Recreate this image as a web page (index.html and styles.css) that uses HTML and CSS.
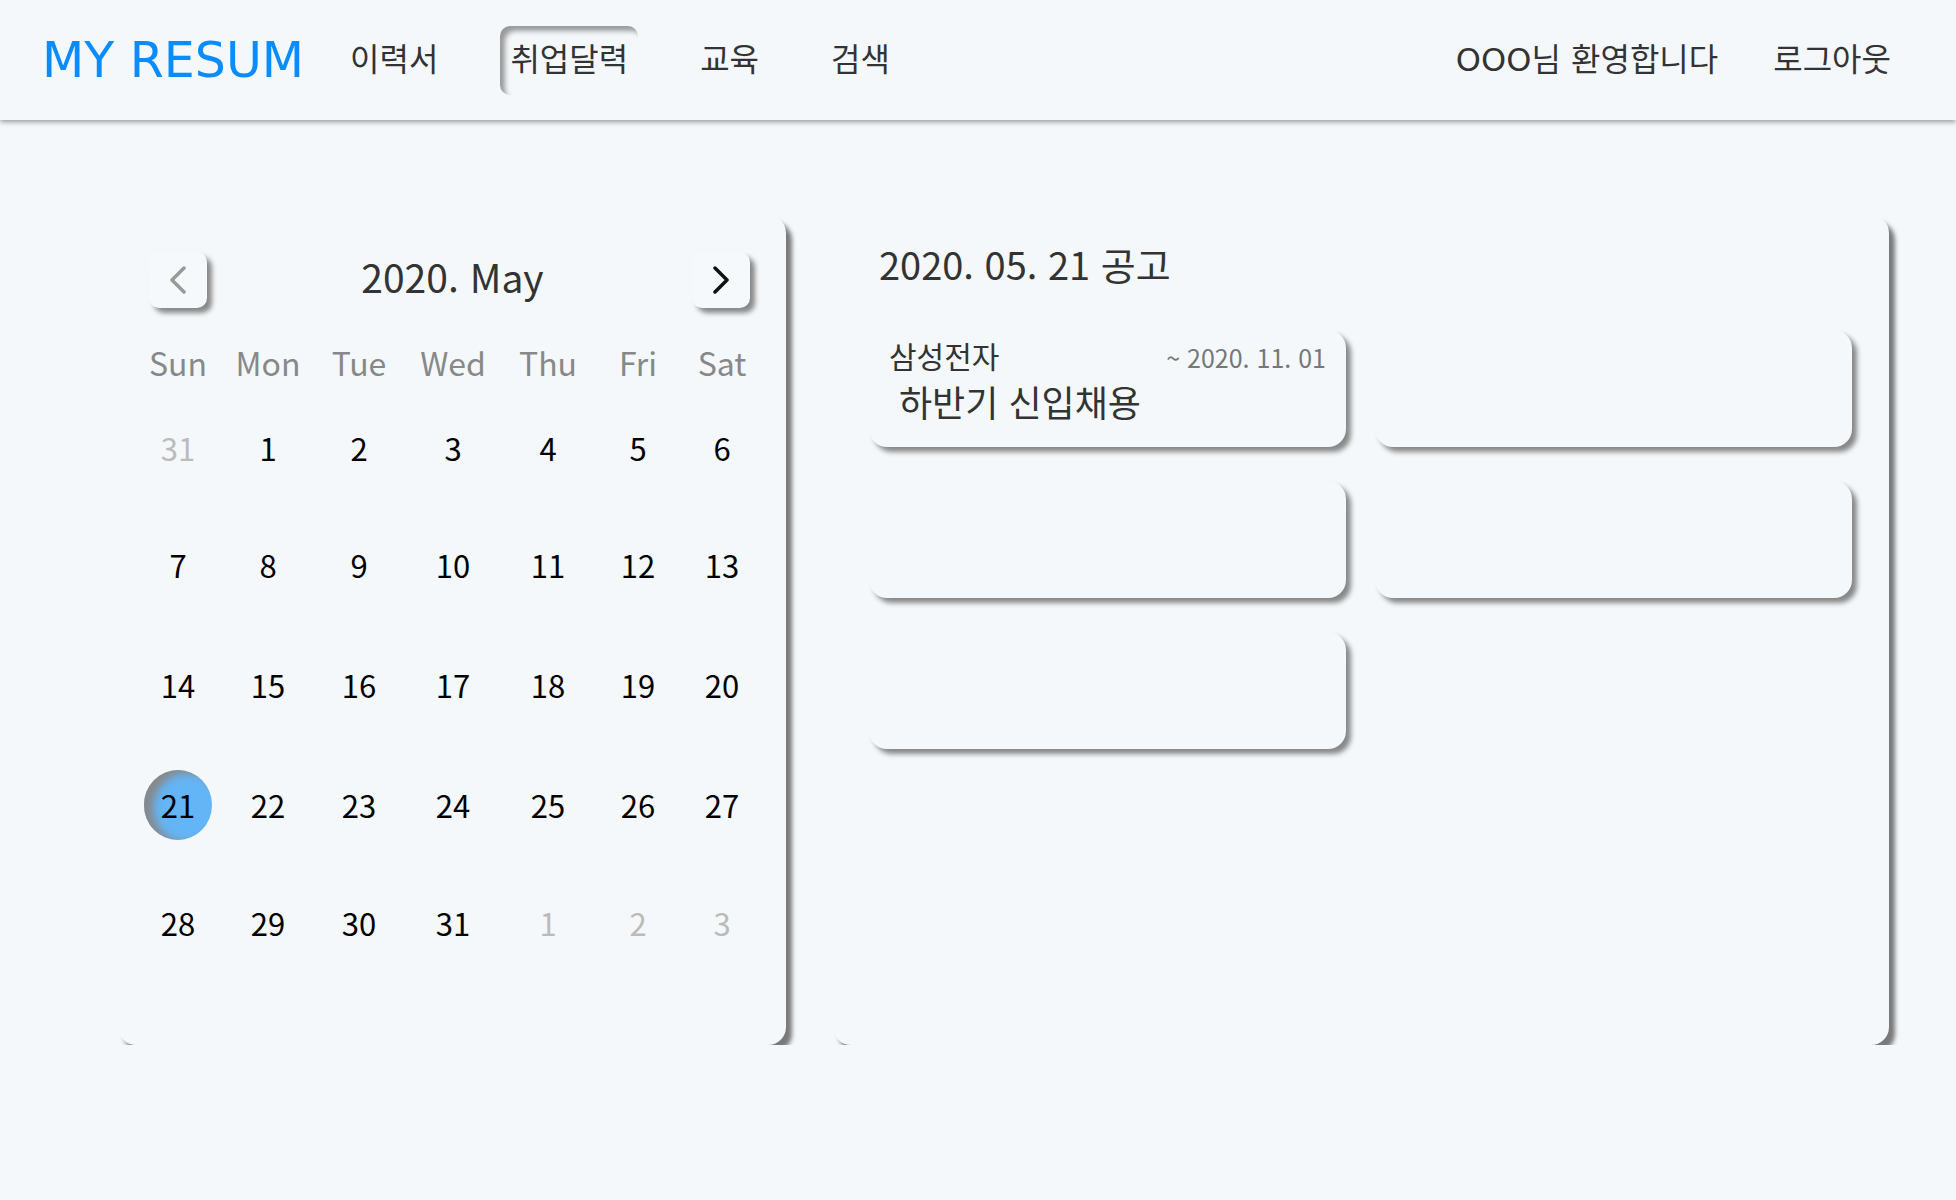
FILE: index.html
```html
<!DOCTYPE html>
<html lang="ko">
<head>
    <meta charset="UTF-8">
    <meta name="viewport" content="width=device-width, initial-scale=1.0">
    <title>MY RESUM - 취업달력</title>
    <link rel="stylesheet" href="styles.css">
</head>
<body>
    <header class="header">
        <div class="logo">MY RESUM</div>
        <nav class="nav">
            <a class="nav-item">이력서</a>
            <a class="nav-item active">취업달력</a>
            <a class="nav-item">교육</a>
            <a class="nav-item">검색</a>
        </nav>
        <div class="user-menu">
            <span class="nav-item">OOO님 환영합니다</span>
            <a class="nav-item">로그아웃</a>
        </div>
    </header>

    <main class="main">
        <!-- Calendar -->
        <section class="calendar card">
            <div class="cal-head">
                <button class="cal-btn prev">
                    <svg width="20" height="28" viewBox="0 0 20 28"><path d="M16 2 L4 14 L16 26" fill="none" stroke="#999" stroke-width="3.5" stroke-linecap="round" stroke-linejoin="round"/></svg>
                </button>
                <div class="cal-title">2020. May</div>
                <button class="cal-btn next">
                    <svg width="20" height="28" viewBox="0 0 20 28"><path d="M4 2 L16 14 L4 26" fill="none" stroke="#111" stroke-width="3.5" stroke-linecap="round" stroke-linejoin="round"/></svg>
                </button>
            </div>

            <div class="cal-grid">
                <div class="wd">Sun</div>
                <div class="wd">Mon</div>
                <div class="wd">Tue</div>
                <div class="wd">Wed</div>
                <div class="wd">Thu</div>
                <div class="wd">Fri</div>
                <div class="wd">Sat</div>

                <div class="day other">31</div>
                <div class="day">1</div>
                <div class="day">2</div>
                <div class="day">3</div>
                <div class="day">4</div>
                <div class="day">5</div>
                <div class="day">6</div>

                <div class="day">7</div>
                <div class="day">8</div>
                <div class="day">9</div>
                <div class="day">10</div>
                <div class="day">11</div>
                <div class="day">12</div>
                <div class="day">13</div>

                <div class="day">14</div>
                <div class="day">15</div>
                <div class="day">16</div>
                <div class="day">17</div>
                <div class="day">18</div>
                <div class="day">19</div>
                <div class="day">20</div>

                <div class="day"><span class="today">21</span></div>
                <div class="day">22</div>
                <div class="day">23</div>
                <div class="day">24</div>
                <div class="day">25</div>
                <div class="day">26</div>
                <div class="day">27</div>

                <div class="day">28</div>
                <div class="day">29</div>
                <div class="day">30</div>
                <div class="day">31</div>
                <div class="day other">1</div>
                <div class="day other">2</div>
                <div class="day other">3</div>
            </div>
        </section>

        <!-- Job postings -->
        <section class="postings card">
            <div class="post-title">2020. 05. 21 공고</div>
            <div class="post-grid">
                <div class="post">
                    <div class="post-top">
                        <span class="company">삼성전자</span>
                        <span class="deadline">~ 2020. 11. 01</span>
                    </div>
                    <div class="post-name">하반기 신입채용</div>
                </div>
                <div class="post"></div>
                <div class="post"></div>
                <div class="post"></div>
                <div class="post"></div>
            </div>
        </section>
    </main>
</body>
</html>
```

FILE: styles.css
```css
body {
    margin: 0;
    background: #f4f8fb;
    font-family: 'Noto Sans CJK KR', sans-serif;
    color: #333;
}

.header {
    height: 120px;
    display: flex;
    align-items: center;
    padding: 0 55px 0 42px;
    background: #f4f8fb;
    box-shadow: 0 2px 5px #999;
    font-family: 'DejaVu Sans', 'Noto Sans CJK KR', sans-serif;
}

.logo {
    font-size: 49px;
    color: #0a8cff;
    margin-right: 36px;
}

.nav {
    display: flex;
    gap: 52px;
    flex: 1;
}

.user-menu {
    display: flex;
    gap: 35px;
}

.nav-item {
    display: block;
    height: 69px;
    line-height: 69px;
    padding: 0 10px;
    font-size: 32px;
    color: #333;
    border-radius: 10px;
    cursor: pointer;
}

.nav-item.active {
    box-shadow: inset 5px 5px 5px #999;
}

.main {
    display: flex;
    gap: 47px;
    padding: 95px 0 0 118px;
}

.card {
    box-sizing: border-box;
    height: 830px;
    border-radius: 18px;
    box-shadow: 6px 7px 4px #7a7a7a;
    background: #f4f8fb;
}

/* calendar */
.calendar {
    width: 668px;
    padding: 37px 23px 0 15px;
}

.cal-head {
    display: flex;
    justify-content: space-between;
    align-items: center;
    padding: 0 13px 0 16px;
}

.cal-btn {
    width: 58px;
    height: 56px;
    border: none;
    border-radius: 10px;
    background: #f6f9fc;
    box-shadow: 5px 5px 5px #888;
    display: flex;
    align-items: center;
    justify-content: center;
    padding: 0;
}

.cal-title {
    font-size: 39px;
    color: #333;
    margin: -8px 0 0 6px;
}

.cal-grid {
    display: grid;
    grid-template-columns: 90px 90px 92px 96px 94px 86px 82px;
    grid-template-rows: 56px 115px 118px 122px 119px 116px;
    margin-top: 26px;
}

.wd {
    display: flex;
    align-items: center;
    justify-content: center;
    font-size: 32px;
    color: #888;
}

.day {
    display: flex;
    align-items: center;
    justify-content: center;
    font-size: 31px;
    color: #000;
}

.day.other {
    color: #bbb;
}

.today {
    width: 68px;
    height: 70px;
    border-radius: 50%;
    background: #64b5f6;
    box-shadow: inset 9px 3px 8px #888;
    display: flex;
    align-items: center;
    justify-content: center;
}

/* postings */
.postings {
    width: 1056px;
    padding: 24px 37px 0 36px;
}

.post-title {
    font-size: 38px;
    line-height: 50px;
    margin-left: 10px;
    color: #333;
}

.post-grid {
    display: grid;
    grid-template-columns: 477px 477px;
    grid-auto-rows: 117px;
    column-gap: 29px;
    row-gap: 34px;
    margin-top: 41px;
}

.post {
    box-sizing: border-box;
    border-radius: 18px;
    box-shadow: 5px 5px 5px #888;
    padding: 3px 20px 0 20px;
}

.post-top {
    display: flex;
    justify-content: space-between;
    align-items: baseline;
}

.company {
    font-size: 30px;
    color: #333;
}

.deadline {
    font-size: 25px;
    color: #777;
}

.post-name {
    font-size: 36px;
    line-height: 44px;
    margin-top: 2px;
    margin-left: 10px;
    color: #333;
}
```
